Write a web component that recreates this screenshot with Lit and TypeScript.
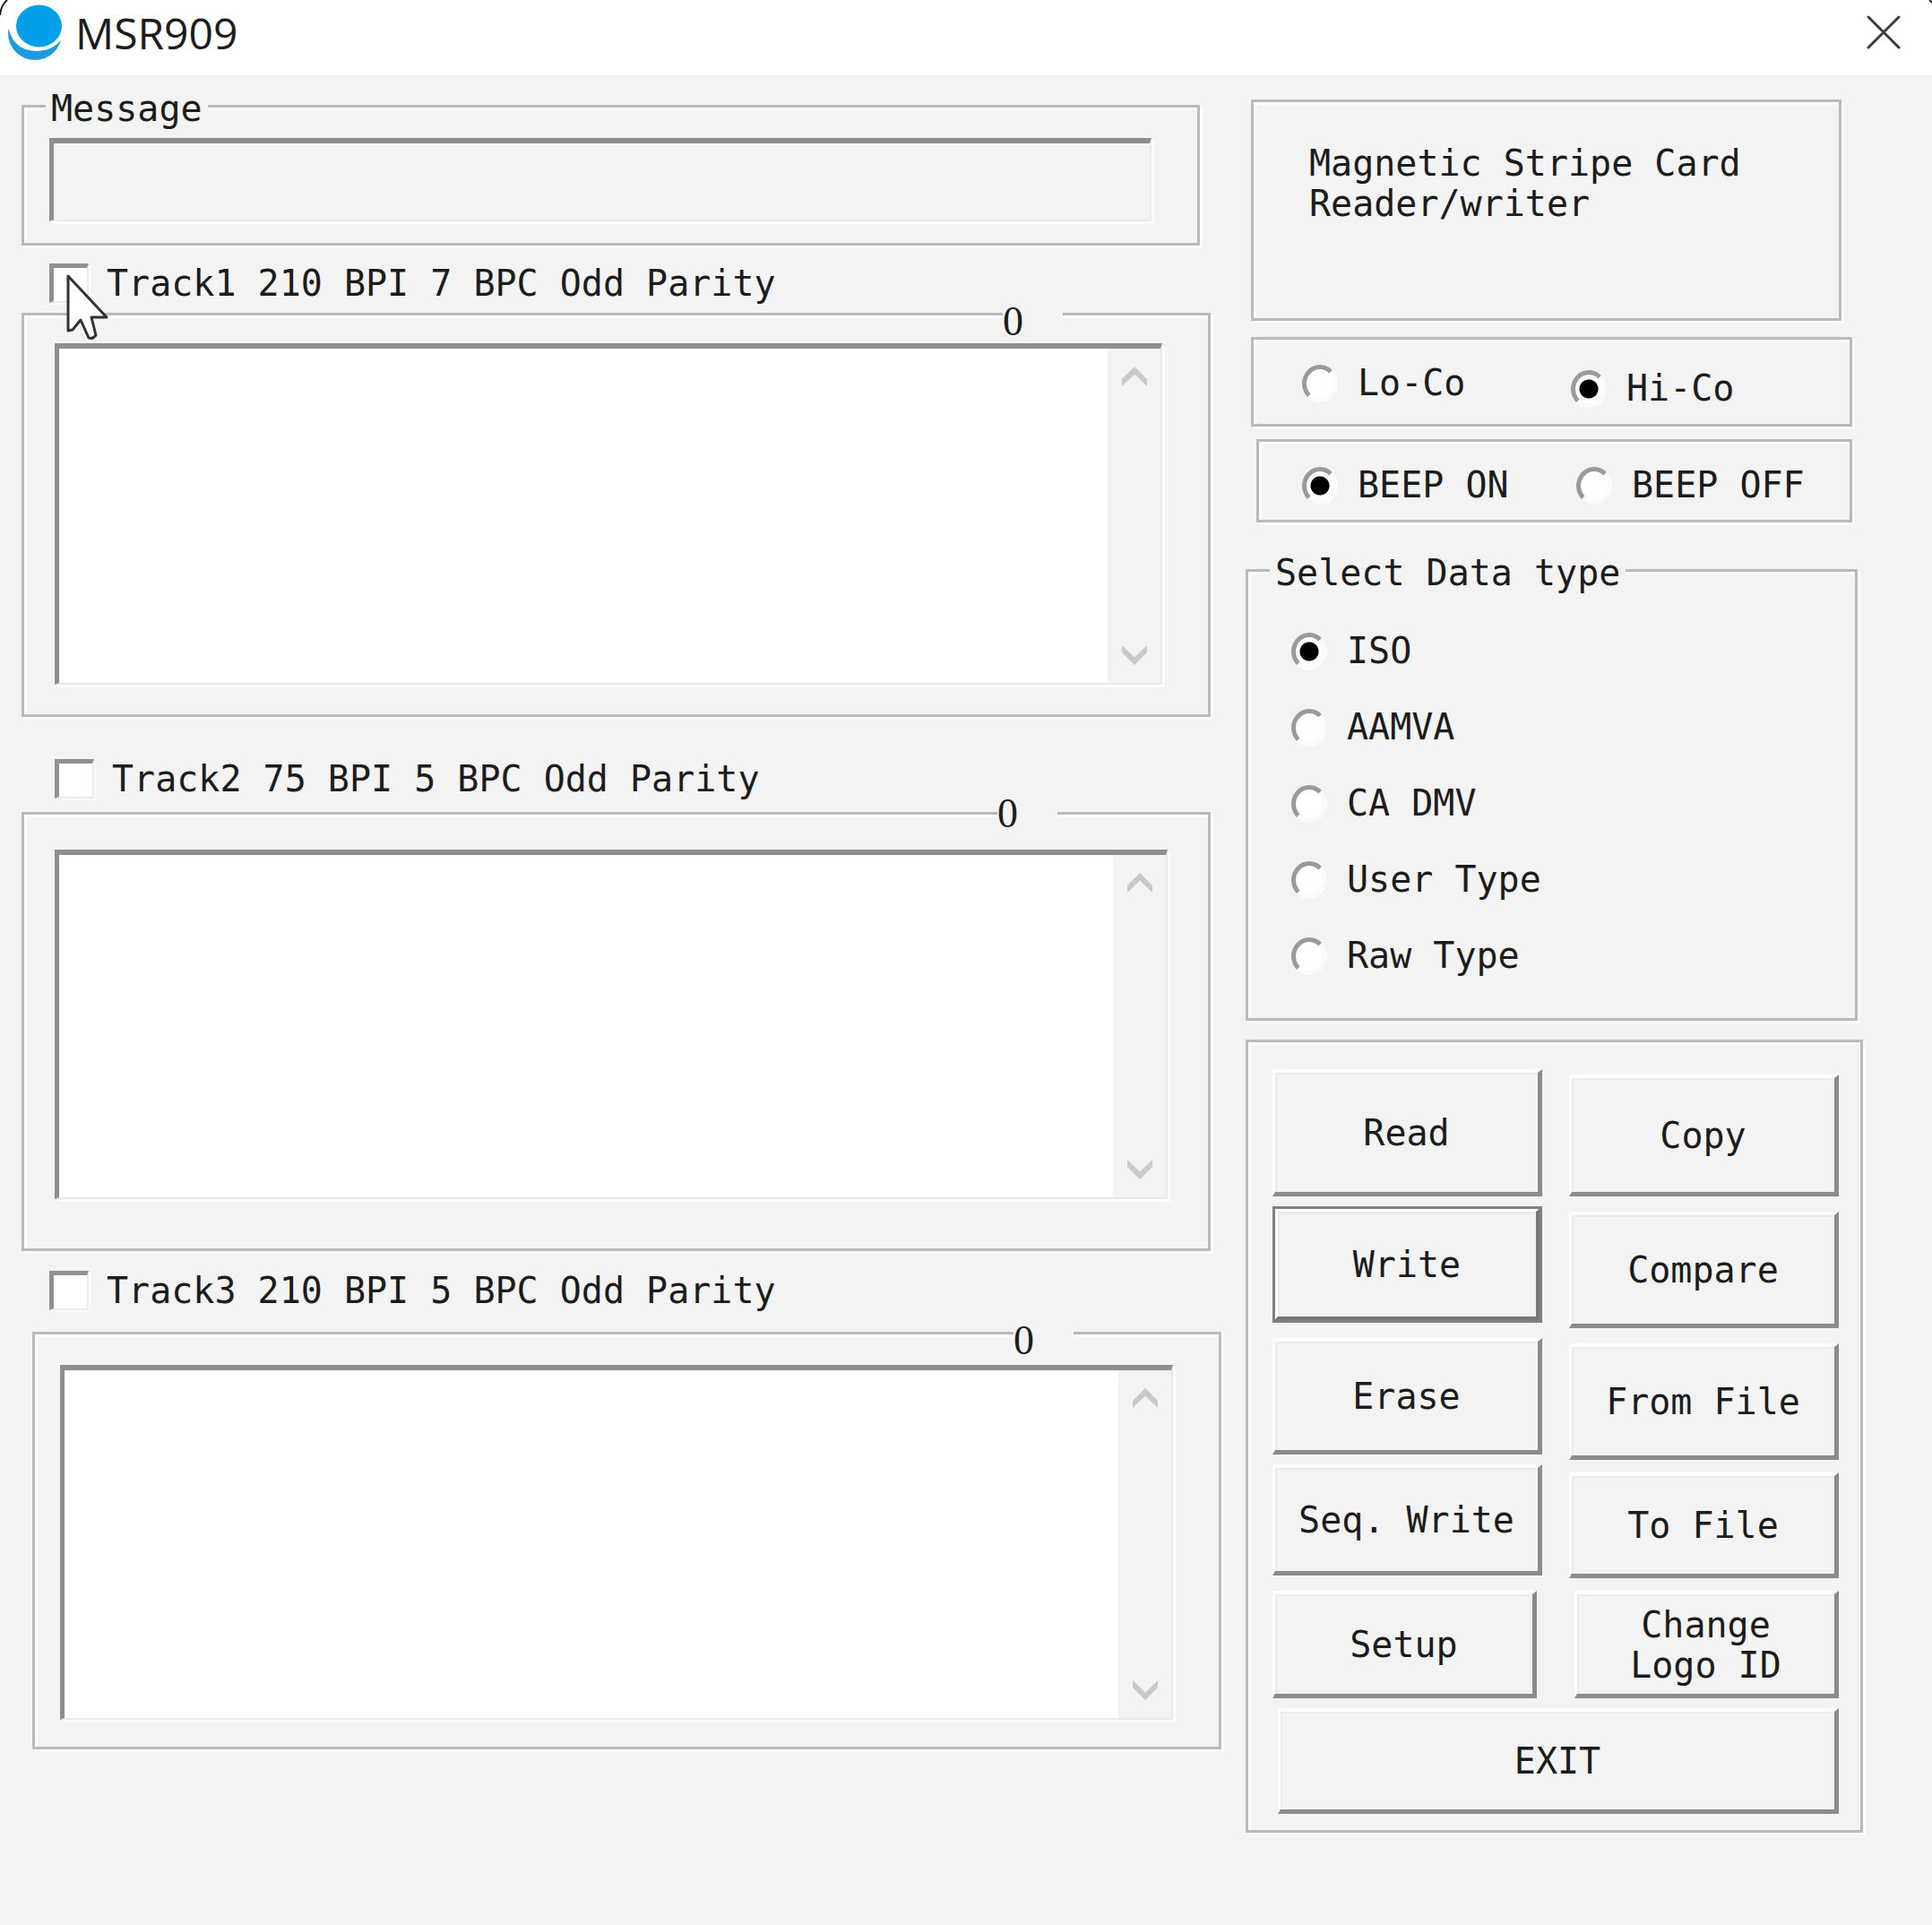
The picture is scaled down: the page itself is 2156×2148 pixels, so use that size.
import { LitElement, html, svg, css } from "lit";
import { customElement, property, state } from "lit/decorators.js";
import { classMap } from "lit/directives/class-map.js";

@customElement("track-panel")
export class TrackPanel extends LitElement {
  @property({ type: Number }) track = 1;
  @property() caption = "";
  @state() private text = "";

  static styles = css`
    :host {
      display: block;
    }
    .head {
      display: flex;
      align-items: center;
      gap: 20px;
      height: 44px;
      line-height: 44px;
      white-space: pre;
      padding-left: 31px;
    }
    .t1 .head {
      margin: 20px 0 11px;
    }
    .t2 .head {
      margin: 47px 0 15px;
      padding-left: 37px;
    }
    .t3 .head {
      margin: 22px 0 24px;
    }
    .check {
      appearance: none;
      box-sizing: border-box;
      flex: none;
      width: 44px;
      height: 44px;
      margin: 0;
      background: #fff;
      border: 5px solid;
      border-color: #919191 #ececec #ececec #919191;
      border-right-width: 2px;
      border-bottom-width: 2px;
      box-shadow: 2px 2px 0 #fafafa;
    }
    .check:checked {
      background: radial-gradient(circle, #000 8px, #fff 9px);
    }
    .frame {
      position: relative;
      border: 3px solid #bababa;
      box-shadow: 3px 3px 0 #fbfbfb, inset 3px 3px 0 #fbfbfb;
      margin-right: 12px;
      padding: 31px 51px 33px 34px;
    }
    .t2 .frame {
      padding: 39px 45px 55px 34px;
    }
    .t3 .frame {
      margin: 0 0 0 12px;
      padding: 34px 51px 30px 28px;
    }
    .count {
      position: absolute;
      right: 162px;
      top: -11px;
      width: 67px;
      height: 32px;
      background: #f3f3f3;
      font: 46px/36px "Liberation Serif", serif;
    }
    .t2 .count {
      right: 168px;
      top: -19px;
    }
    .box {
      display: flex;
      height: 381px;
      box-sizing: border-box;
      background: #fff;
      border: solid;
      border-width: 6px 2px 2px 5px;
      border-color: #8e8e8e #e9e9e9 #e9e9e9 #8e8e8e;
      box-shadow: 3px 3px 0 #fbfbfb;
    }
    .t2 .box {
      height: 390px;
    }
    .t3 .box {
      height: 396px;
    }
    .data {
      flex: 1;
      min-width: 0;
      border: 0;
      margin: 0;
      padding: 6px;
      resize: none;
      outline: 0;
      overflow: hidden;
      background: #fff;
      font: inherit;
      color: inherit;
    }
    .bar {
      display: flex;
      flex-direction: column;
      justify-content: space-between;
      width: 59px;
      background: #f3f3f3;
    }
    .arrow {
      display: grid;
      place-items: center;
      height: 62px;
      padding: 0;
      border: 0;
      background: none;
    }
    .arrow svg {
      display: block;
      width: 28px;
      height: 22px;
      fill: #c9c9c9;
    }
  `;

  render() {
    const id = `track${this.track}`;
    return html`
      <div class=${classMap({ [`t${this.track}`]: true })}>
        <div class="head">
          <input class="check" type="checkbox" id=${id} />
          <label for=${id}>${this.caption}</label>
        </div>
        <div class="frame">
          <output class="count">${this.text.length}</output>
          <div class="box">
            <textarea
              class="data"
              aria-label=${this.caption}
              @input=${(e: Event) => (this.text = (e.target as HTMLTextAreaElement).value)}
            ></textarea>
            <div class="bar">
              <button class="arrow" type="button" aria-label="Scroll up">
                <svg viewBox="0 0 28 22"><path d="M14 0 28 14V22L14 8.500 0 22V14Z" /></svg>
              </button>
              <button class="arrow" type="button" aria-label="Scroll down">
                <svg viewBox="0 0 28 22"><path d="M14 22 28 8V0L14 13.500 0 0V8Z" /></svg>
              </button>
            </div>
          </div>
        </div>
      </div>
    `;
  }
}

interface Choice {
  label: string;
  checked?: boolean;
}

const logo = svg`
  <ellipse cx="39" cy="37" rx="30" ry="30" fill="#1f9ade" />
  <path d="M8 24Q12 56 40 57Q60 57 70 42V0H8Z" fill="#fff" />
  <ellipse cx="43.500" cy="29" rx="25.500" ry="23.500" fill="#049fe9" />
`;

@customElement("app-root")
export class AppRoot extends LitElement {
  static styles = css`
    :host {
      display: block;
      position: relative;
      min-height: 100vh;
      background: #f3f3f3;
      color: #1c1c1c;
      font: 40px/45px "DejaVu Sans Mono", "Liberation Mono", monospace;
    }
    .title {
      display: flex;
      align-items: center;
      height: 84px;
      background: #fff;
    }
    .logo {
      width: 82px;
      height: 76px;
      margin-bottom: 8px;
    }
    .name {
      flex: 1;
      margin: 0 0 10px;
      padding-left: 2px;
      font: 400 48px/60px "Open Sans", "Noto Sans", sans-serif;
    }
    .close {
      display: grid;
      place-items: center;
      width: 108px;
      height: 72px;
      margin-bottom: 12px;
      padding: 0;
      border: 0;
      background: none;
    }
    .close svg {
      width: 38px;
      height: 38px;
      stroke: #3c3c3c;
      stroke-width: 3;
      stroke-linecap: round;
    }
    .corner {
      position: absolute;
      top: 0;
      left: 0;
      width: 12px;
      height: 18px;
      fill: none;
      stroke: #222;
      stroke-width: 2;
    }
    .corner.right {
      left: auto;
      right: 0;
    }
    .columns {
      display: grid;
      grid-template-columns: 1339fr 689fr;
      column-gap: 27px;
      align-items: start;
      padding: 0 77px 96px 24px;
    }
    .left {
      padding-top: 9px;
    }
    .right-side {
      padding-top: 27px;
    }
    .group {
      min-width: 0;
      margin: 0;
      padding: 0;
      border: 3px solid #bababa;
      box-shadow: 3px 3px 0 #fbfbfb, inset 3px 3px 0 #fbfbfb;
    }
    .legend {
      margin-left: 24px;
      padding: 6px 6px 0;
      background: #f3f3f3;
    }
    .message {
      margin-right: 24px;
    }
    .message .inner {
      padding: 10px 51px 24px 28px;
    }
    .field {
      display: block;
      box-sizing: border-box;
      width: 100%;
      height: 93px;
      margin: 0;
      padding: 0 12px;
      outline: 0;
      border: solid;
      border-width: 6px 2px 2px 5px;
      border-color: #8e8e8e #e9e9e9 #e9e9e9 #8e8e8e;
      border-radius: 0;
      background: #f3f3f3;
      box-shadow: 3px 3px 0 #fbfbfb;
      font: inherit;
      color: inherit;
    }
    .about {
      margin: 0 24px 18px 6px;
      padding: 46px 48px 105px 62px;
    }
    .about p {
      margin: 0;
    }
    .pair {
      display: grid;
      align-items: start;
      padding: 26px 0 17px 54px;
      grid-template-columns: 300fr 311fr;
      margin: 0 12px 14px 6px;
    }
    .pair .option:last-child {
      margin-top: 6px;
    }
    .pair.beep {
      grid-template-columns: 306fr 305fr;
      margin: 0 12px 28px;
      padding: 26px 0 16px 48px;
    }
    .pair.beep .option:last-child {
      margin: 0;
    }
    .option {
      display: flex;
      align-items: center;
      gap: 22px;
      white-space: pre;
    }
    .radio {
      appearance: none;
      box-sizing: border-box;
      flex: none;
      width: 40px;
      height: 42px;
      margin: 0;
      border: 5px solid;
      border-color: #9a9a9a #fbfbfb #fbfbfb #9a9a9a;
      border-radius: 50%;
      background: #fff;
    }
    .radio:checked {
      background: radial-gradient(circle, #000 10px, #fff 11px);
    }
    .types {
      margin: 0 6px 21px 0;
    }
    .types .list {
      padding: 22px 28px 27px 48px;
    }
    .types .option {
      height: 85px;
    }
    .actions {
      display: grid;
      grid-template-columns: 1fr 1fr;
      column-gap: 30px;
      padding: 30px 24px 18px 27px;
    }
    .stack {
      display: flex;
      flex-direction: column;
    }
    .stack.second {
      padding-top: 6px;
    }
    .btn {
      box-sizing: border-box;
      height: 118px;
      margin: 0;
      padding: 2px 0 0;
      border: solid;
      border-width: 4px 5px 5px 3px;
      border-color: #fcfcfc #8b8b8b #8b8b8b #fcfcfc;
      border-radius: 0;
      background: #f3f3f3;
      box-shadow: inset 2px 2px 0 #ebebeb;
      font: inherit;
      color: inherit;
      white-space: pre-line;
    }
    .h142 {
      height: 142px;
    }
    .h136 {
      height: 136px;
    }
    .h130 {
      height: 130px;
    }
    .h124 {
      height: 124px;
    }
    .h120 {
      height: 120px;
    }
    .near {
      margin-bottom: 11px;
    }
    .mid {
      margin-bottom: 14px;
    }
    .far {
      margin-bottom: 17px;
    }
    .default {
      border-color: #fcfcfc #777 #777 #fcfcfc;
      border-width: 6px 7px 7px 6px;
      outline: 3px solid #808080;
      outline-offset: -3px;
    }
    .short-right {
      margin-right: 6px;
    }
    .short-left {
      margin-left: 6px;
    }
    .exit {
      grid-column: 1 / -1;
    }
    .pointer {
      position: absolute;
      left: 73px;
      top: 303px;
      width: 50px;
      height: 78px;
      pointer-events: none;
    }
  `;

  private option(group: string, c: Choice) {
    const id = c.label.toLowerCase().replace(/\W/g, "-");
    return html`
      <div class="option">
        <input class="radio" type="radio" name=${group} id=${id} ?checked=${c.checked} />
        <label for=${id}>${c.label}</label>
      </div>
    `;
  }

  private button(label: string, classes: string) {
    return html`<button type="button" class="btn ${classes}">${label}</button>`;
  }

  render() {
    return html`
      <header class="title">
        <svg class="logo" viewBox="0 0 82 76" aria-hidden="true">${logo}</svg>
        <h1 class="name">MSR909</h1>
        <button class="close" type="button" aria-label="Close">
          <svg viewBox="0 0 38 38"><path d="M2 2 36 36M36 2 2 36" /></svg>
        </button>
      </header>
      <svg class="corner" viewBox="0 0 12 18"><path d="M0 17Q1 6 8 0" /></svg>
      <svg class="corner right" viewBox="0 0 12 18"><path d="M12 3 9 0" /></svg>

      <main class="columns">
        <div class="left">
          <fieldset class="group message">
            <legend class="legend">Message</legend>
            <div class="inner">
              <input class="field" type="text" readonly aria-label="Message" />
            </div>
          </fieldset>
          <track-panel .track=${1} caption="Track1 210 BPI 7 BPC Odd Parity"></track-panel>
          <track-panel .track=${2} caption="Track2 75 BPI 5 BPC Odd Parity"></track-panel>
          <track-panel .track=${3} caption="Track3 210 BPI 5 BPC Odd Parity"></track-panel>
        </div>

        <div class="right-side">
          <div class="group about">
            <p>Magnetic Stripe Card<br />Reader/writer</p>
          </div>
          <div class="group pair" role="radiogroup" aria-label="Coercivity">
            ${this.option("co", { label: "Lo-Co" })}
            ${this.option("co", { label: "Hi-Co", checked: true })}
          </div>
          <div class="group pair beep" role="radiogroup" aria-label="Beep">
            ${this.option("beep", { label: "BEEP ON", checked: true })}
            ${this.option("beep", { label: "BEEP OFF" })}
          </div>
          <fieldset class="group types">
            <legend class="legend">Select Data type</legend>
            <div class="list">
              ${["ISO", "AAMVA", "CA DMV", "User Type", "Raw Type"].map((label, i) =>
                this.option("type", { label, checked: i === 0 }),
              )}
            </div>
          </fieldset>
          <div class="group actions">
            <div class="stack">
              ${this.button("Read", "h142 near")} ${this.button("Write", "h130 far default")}
              ${this.button("Erase", "h130 near")} ${this.button("Seq. Write", "h124 far")}
              ${this.button("Setup", "h120 near short-right")}
            </div>
            <div class="stack second">
              ${this.button("Copy", "h136 far")} ${this.button("Compare", "h130 far")}
              ${this.button("From File", "h130 mid")} ${this.button("To File", "mid")}
              ${this.button("Change\nLogo ID", "h120 near short-left")}
            </div>
            ${this.button("EXIT", "exit short-left")}
          </div>
        </div>
      </main>

      <svg class="pointer" viewBox="0 0 50 78" aria-hidden="true">
        <path
          d="M3 5V66L8 65 17 54 26 74Q30 76 34 71L29 51H46Z"
          fill="#fff"
          stroke="#333"
          stroke-width="3"
          stroke-linejoin="round"
        />
      </svg>
    `;
  }
}
